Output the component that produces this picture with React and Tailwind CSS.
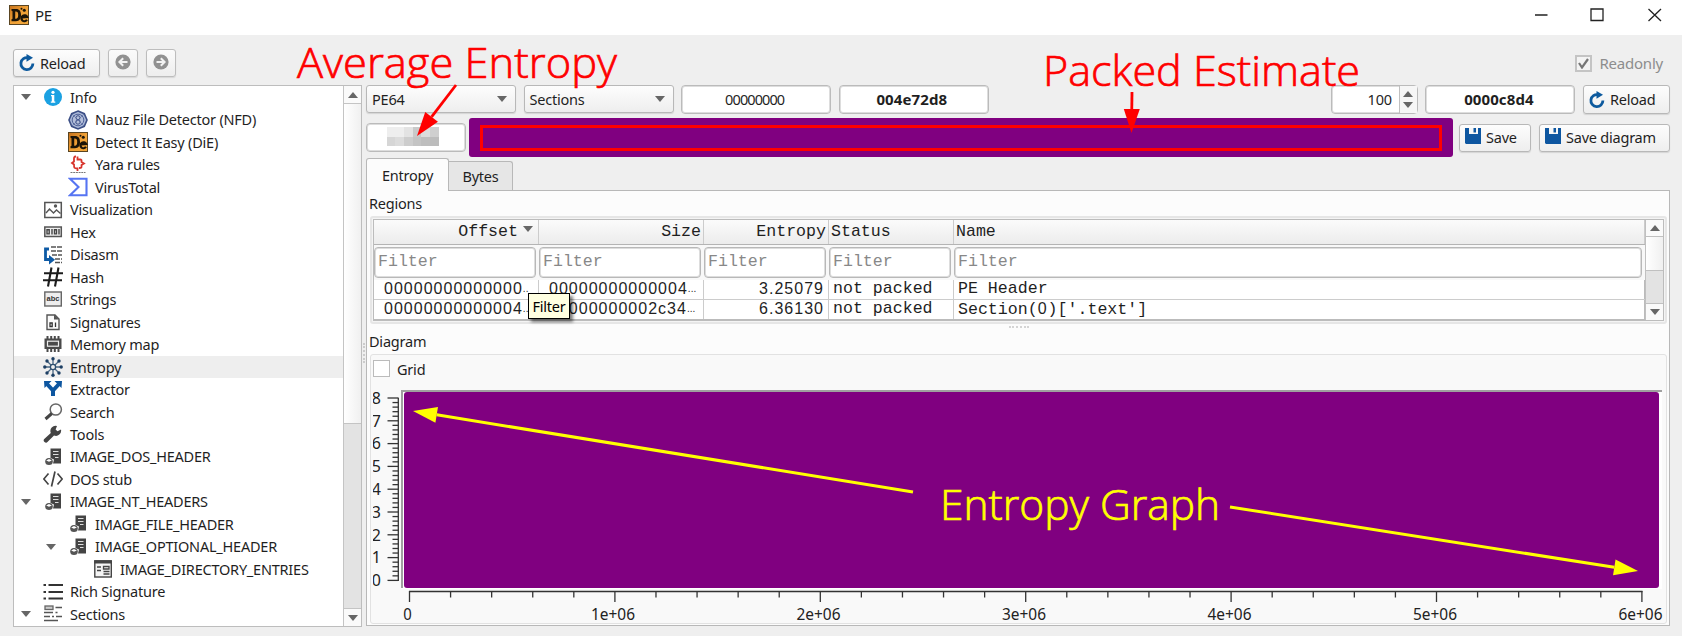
// App.jsx
const UI = "font-['Noto_Sans','Open_Sans',sans-serif]";

function DieIcon({ size = 20 }) {
  return (
    <svg width={size} height={size} viewBox="0 0 20 20" className="shrink-0">
      <defs>
        <linearGradient id="die" x1="0" y1="0" x2="1" y2="1">
          <stop offset="0" stopColor="#c8741d" />
          <stop offset=".5" stopColor="#f0a136" />
          <stop offset="1" stopColor="#f2a73a" />
        </linearGradient>
      </defs>
      <rect width="20" height="20" fill="#5a4522" />
      <rect x="1" y="1" width="18" height="18" fill="url(#die)" />
      <path d="M2.500 4h4.500c3.400 0 5 2.200 5 6s-1.600 6.200-5 6.200h-4.500v-2l1-.5v-7.500l-1-.5zM6.200 6.500v7.200c2.200.3 3-1 3-3.700s-.8-3.800-3-3.500z" fill="#1b1408" fillRule="evenodd" />
      <path d="M18 14.800a3 3 0 1 1 .2-2.700l-5 .3" fill="none" stroke="#1b1408" strokeWidth="2.200" />
      <circle cx="15.300" cy="5.300" r="1.500" fill="#1b1408" />
      <circle cx="12.500" cy="3.800" r="1" fill="#1b1408" />
    </svg>
  );
}

function ReloadIcon() {
  return (
    <svg width="16" height="18" viewBox="0 0 16 18" className="shrink-0">
      <path d="M9.200 3.700A6 6 0 1 0 13.900 9.500" fill="none" stroke="#0d5a9e" strokeWidth="2.800" />
      <path d="M7.500 0l6.500 3.700-6.500 4z" fill="#0d5a9e" />
    </svg>
  );
}

function SaveIcon() {
  return (
    <svg width="16" height="16" viewBox="0 0 16 16" className="mb-[3px] shrink-0">
      <path d="M0 0h16v16H1l-1-1z" fill="#0d56a0" />
      <rect x="4" y="0" width="9" height="6" fill="#f6f6f6" />
      <rect x="8.500" y="0" width="2.500" height="4.500" fill="#0d56a0" />
    </svg>
  );
}

function RoundArrow({ flip }) {
  return (
    <svg width="16" height="16" viewBox="0 0 16 16" className={flip ? "mb-[2px] rotate-180" : "mb-[2px]"}>
      <circle cx="8" cy="8" r="7.600" fill="#878787" />
      <path d="M12.500 8H5M8.200 4.200L4.400 8l3.800 3.800" fill="none" stroke="#f3f3f3" strokeWidth="2" />
    </svg>
  );
}

// tree icons, each drawn on a 20x20 box
const icons = {
  info: (
    <>
      <circle cx="10" cy="10" r="9" fill="#1ba1e2" />
      <path d="M8 8h3.300v6.500h1v1.200H7.800v-1.200h1V9.200H8z" fill="#fff" />
      <circle cx="10" cy="5.300" r="1.600" fill="#fff" />
    </>
  ),
  nauz: (
    <>
      <path d="M10 1l6.300 2.700L19 10l-2.700 6.300L10 19l-6.300-2.700L1 10l2.700-6.300z" fill="#a9b7d6" stroke="#3c4f86" strokeWidth="1.600" />
      <circle cx="10" cy="10" r="5.800" fill="#b4bfda" stroke="#52649a" />
      <circle cx="10" cy="7.700" r="2" fill="none" stroke="#3c4f86" />
      <circle cx="10" cy="12" r="2.200" fill="none" stroke="#3c4f86" />
      <path d="M4 4l12 12M16 4L4 16" stroke="#52649a" strokeWidth=".6" />
    </>
  ),
  yara: (
    <>
      <path d="M8 1.500C5.500 1.500 6 3 6 6.500L4 8l2 1.500c0 3.500 0 4 3.500 4V16M9.500 1.500v3H12c2 0 1.500 1 1.500 2.500L16 8.500l-2.500 1.500c0 2.500.5 3-2.500 3" fill="none" stroke="#d8342c" strokeWidth="1.800" />
      <path d="M2.500 17.500h15" stroke="#777" strokeWidth="1.200" strokeDasharray="2 .7" />
    </>
  ),
  vt: <path d="M2 1.800h16.500v16.500H2l8.500-8.200z" fill="none" stroke="#5674f2" strokeWidth="2.100" />,
  vis: (
    <>
      <rect x="1.800" y="2.500" width="16.500" height="15" fill="#fff" stroke="#555" strokeWidth="1.500" />
      <path d="M3 13l3.500-4 4 4 3-3 4 3.500" fill="none" stroke="#555" strokeWidth="1.400" />
      <circle cx="12.500" cy="6" r="1.700" fill="#555" />
    </>
  ),
  hex: (
    <>
      <rect x="1.800" y="5" width="16.500" height="9.500" fill="#eee" stroke="#555" strokeWidth="1.500" />
      <path d="M4 7.700h2.200v4.200H4zM9 7v5.500M11.500 7.700h2v4.200h-2zM16 7v5.500" fill="none" stroke="#444" strokeWidth="1.400" />
    </>
  ),
  disasm: (
    <>
      <path d="M8 2h11M8 6h11M9 10h10M12 14h7M12 17.500h7" stroke="#555" strokeWidth="1.500" strokeDasharray="5 1" />
      <path d="M6 4H2.500v10.500H8" fill="none" stroke="#0d5aa5" strokeWidth="2.800" />
      <path d="M6 10l6 4.700L6 19.500z" fill="#0d5aa5" />
    </>
  ),
  hash: <path d="M8.500.5l-3.500 19M15.500.5l-3.500 19M1 6.200h19M0 13.200h19" stroke="#1c1c1c" strokeWidth="2.100" />,
  strings: (
    <>
      <rect x="1.800" y="3" width="16.500" height="14" fill="#eee" stroke="#666" strokeWidth="1.400" />
      <text x="10" y="12.300" textAnchor="middle" fontSize="7.500" fontWeight="700" letterSpacing="0" fontFamily="Liberation Sans, sans-serif" fill="#333">abc</text>
    </>
  ),
  sig: (
    <>
      <path d="M4 3h8l4 4v10.500H4z" fill="#fafafa" stroke="#555" strokeWidth="1.400" />
      <path d="M11 2.500v5h5z" fill="#555" />
      <path d="M7 11h2.200v3.500H7zM12.500 10.500v4.500" fill="none" stroke="#333" strokeWidth="1.300" />
    </>
  ),
  mem: (
    <>
      <path d="M4.500 2v16M8.200 2v16M11.800 2v16M15.500 2v16" stroke="#4a4a4a" strokeWidth="2" />
      <rect x="1.500" y="4.500" width="17" height="10.500" fill="#4a4a4a" />
      <rect x="4.500" y="7.200" width="11" height="5" fill="#4a4a4a" stroke="#eee" strokeWidth="1.200" />
    </>
  ),
  entropy: (
    <>
      <path d="M10 2v16M2 10h16M4.200 4.200l11.600 11.600M15.800 4.200L4.200 15.800" stroke="#4a6884" strokeWidth="1.300" />
      <circle cx="10" cy="10" r="2.600" fill="#efefef" stroke="#2c4d6e" strokeWidth="1.300" />
      {[[10, 1.800], [10, 18.200], [1.800, 10], [18.200, 10], [4, 4], [16, 4], [4, 16], [16, 16]].map(([x, y]) => (
        <circle key={x + "-" + y} cx={x} cy={y} r="1.700" fill="#1d3f63" />
      ))}
    </>
  ),
  extractor: (
    <>
      <path d="M4 5l6 6.500V17M16 5l-6 6.500" fill="none" stroke="#0d56a0" strokeWidth="4" />
      <path d="M1 2h7.500L1.500 9zM19 2h-7.500l7 7z" fill="#0d56a0" />
    </>
  ),
  search: (
    <>
      <circle cx="12.800" cy="7.500" r="5.600" fill="#fff" stroke="#666" strokeWidth="1.500" />
      <path d="M8.800 11.500L2.500 17" stroke="#444" strokeWidth="3" />
    </>
  ),
  tools: (
    <path d="M18 5.500l-3.500 1.700-1.900-1.700L14 2a5.200 5.200 0 0 0-6.200 7L1.500 14.800a2.200 2.200 0 1 0 3.200 3L11 11.500a5.200 5.200 0 0 0 7-6z" fill="#444" />
  ),
  header: (
    <>
      <path d="M7.500 1.500h10.500v15H10l1-4-3.500-1.500z" fill="#444" />
      <path d="M10 4.500h5.500M10 7.500h5.500M12 10.500h3.500" stroke="#ddd" strokeWidth="1.200" />
      <ellipse cx="6" cy="14.500" rx="3.800" ry="3.500" fill="#555" />
      <path d="M3.200 13.500l2.800-1.500 2.800 1.500-2.800 1.200z" fill="#fff" />
    </>
  ),
  stub: (
    <path d="M5.500 4.500L.8 10l4.700 5.500M14.500 4.500l4.700 5.500-4.700 5.500M12 2.500L8.500 17.500" fill="none" stroke="#444" strokeWidth="1.700" />
  ),
  dir: (
    <>
      <rect x="1.800" y="2" width="16.500" height="16" fill="#f4f4f4" stroke="#444" strokeWidth="1.400" />
      <rect x="1.200" y="1.200" width="17.600" height="3.300" fill="#444" />
      <path d="M4 8h4M4 11.500h4M10.500 7.500h5.500v2.500h-5.500zM10.500 12.500h6M10.500 15h6" fill="none" stroke="#444" strokeWidth="1.300" />
    </>
  ),
  rich: <path d="M.5 3h2.500M.5 10h2.500M.5 16.500h2.500M5.500 3H20M5.500 10H20M5.500 16.500H20" stroke="#333" strokeWidth="2.200" />,
  sections: (
    <>
      <rect x="2" y="2" width="8" height="3.500" fill="#ccc" stroke="#666" strokeWidth="1.300" />
      <path d="M12.500 3.500h6.500M1 8.500h9M12.500 8.500h2M1 12.500h6M9 12.500h2M13 12.500h6M1 16.500h14" stroke="#555" strokeWidth="1.500" />
    </>
  ),
};

const tree = [
  { icon: "info", label: "Info", depth: 0, open: true },
  { icon: "nauz", label: "Nauz File Detector (NFD)", depth: 1 },
  { icon: "die", label: "Detect It Easy (DiE)", depth: 1 },
  { icon: "yara", label: "Yara rules", depth: 1 },
  { icon: "vt", label: "VirusTotal", depth: 1 },
  { icon: "vis", label: "Visualization", depth: 0 },
  { icon: "hex", label: "Hex", depth: 0 },
  { icon: "disasm", label: "Disasm", depth: 0 },
  { icon: "hash", label: "Hash", depth: 0 },
  { icon: "strings", label: "Strings", depth: 0 },
  { icon: "sig", label: "Signatures", depth: 0 },
  { icon: "mem", label: "Memory map", depth: 0 },
  { icon: "entropy", label: "Entropy", depth: 0, selected: true },
  { icon: "extractor", label: "Extractor", depth: 0 },
  { icon: "search", label: "Search", depth: 0 },
  { icon: "tools", label: "Tools", depth: 0 },
  { icon: "header", label: "IMAGE_DOS_HEADER", depth: 0 },
  { icon: "stub", label: "DOS stub", depth: 0 },
  { icon: "header", label: "IMAGE_NT_HEADERS", depth: 0, open: true },
  { icon: "header", label: "IMAGE_FILE_HEADER", depth: 1 },
  { icon: "header", label: "IMAGE_OPTIONAL_HEADER", depth: 1, open: true },
  { icon: "dir", label: "IMAGE_DIRECTORY_ENTRIES", depth: 2 },
  { icon: "rich", label: "Rich Signature", depth: 0 },
  { icon: "sections", label: "Sections", depth: 0, open: true },
];

const indents = ["pl-[7px]", "pl-[32px]", "pl-[57px]"];

function Caret({ up, className = "" }) {
  return (
    <svg width="10" height="6" viewBox="0 0 10 6" className={className}>
      <path d={up ? "M0 6h10L5 0z" : "M0 0h10L5 6z"} fill="#666666" />
    </svg>
  );
}

function TreeRow({ icon, label, depth, open, selected }) {
  return (
    <div className={`flex h-[22.480px] items-center ${indents[depth]} ${selected ? "bg-[#eeeeee]" : ""}`}>
      <span className="flex w-[22px] shrink-0">{open && <Caret />}</span>
      {icon === "die" ? (
        <DieIcon />
      ) : (
        <svg width="20" height="20" viewBox="0 0 20 20" className="shrink-0">{icons[icon]}</svg>
      )}
      <span className="ml-[7px] whitespace-nowrap">{label}</span>
    </div>
  );
}

function Button({ children, className = "" }) {
  return (
    <button className={`flex items-center rounded-[3px] border border-[#b8b8b8] bg-linear-to-b from-[#fdfdfd] to-[#eeeeee] shadow-[0_1px_1px_#d4d4d4] ${className}`}>
      {children}
    </button>
  );
}

function Field({ children, className = "" }) {
  return (
    <div className={`flex h-[29px] items-center justify-center rounded-[4px] border border-[#bbbbbb] bg-white shadow-[inset_0_0_0_1px_#dddddd] ${className}`}>
      {children}
    </div>
  );
}

function Combo({ children }) {
  return (
    <Button className="h-[28px] w-[150px] justify-between pl-[5px] pr-[8px]">
      <span>{children}</span>
      <Caret />
    </Button>
  );
}

function Sidebar() {
  return (
    <aside className="w-[349px]">
      <div className="flex h-[28px] gap-[8px]">
        <Button className="w-[87px] gap-[5px] pl-[5px]">
          <ReloadIcon />
          Reload
        </Button>
        <Button className="w-[30px] justify-center opacity-90"><RoundArrow /></Button>
        <Button className="w-[30px] justify-center opacity-90"><RoundArrow flip /></Button>
      </div>
      <div className="mt-[8px] flex h-[542px] border border-[#bdbdbd] bg-white">
        <div className="flex-1">
          {tree.map((row) => (
            <TreeRow key={row.label} {...row} />
          ))}
        </div>
        <div className="flex w-[18px] flex-col border-l border-[#c4c4c4] bg-[#e3e3e3]">
          <div className="flex h-[18px] items-center justify-center border-b border-[#c4c4c4] bg-[#fafafa]"><Caret up /></div>
          <div className="h-[320px] border-b border-[#c4c4c4] bg-linear-to-r from-white to-[#f0f0f0]" />
          <div className="mt-auto flex h-[18px] items-center justify-center border-t border-[#c4c4c4] bg-[#fafafa]"><Caret /></div>
        </div>
      </div>
    </aside>
  );
}

const mosaic = [
  "bg-[#eeeeee]", "bg-[#eeeeee]", "bg-[#e3e3e3]", "bg-[#c9c9c9]", "bg-[#dcdcdc]", "bg-[#cfcfcf]",
  "bg-[#d6d6d6]", "bg-[#dcdcdc]", "bg-[#cdcdcd]", "bg-[#c4c4c4]", "bg-[#bebebe]", "bg-[#bcbcbc]",
];

function Controls() {
  return (
    <>
      <div className="flex h-[29px] gap-[7.600px]">
        <Combo>PE64</Combo>
        <Combo>Sections</Combo>
        <Field className="w-[150px] pr-[3px] text-[14.500px] tracking-[-0.900px]">00000000</Field>
        <Field className="w-[150px] pr-[4px] text-[15px] font-bold tracking-[0.100px]">004e72d8</Field>
        <div className="ml-auto flex h-[29px] w-[87px] rounded-[4px] border border-[#bbbbbb] bg-white shadow-[inset_0_0_0_1px_#dddddd]">
          <span className="flex flex-1 items-center justify-end pr-[7px]">100</span>
          <span className="flex w-[18px] flex-col items-center justify-center gap-[5px] border-l border-[#c0c0c0] bg-[#f6f6f6]">
            <Caret up />
            <Caret />
          </span>
        </div>
        <Field className="w-[150px] pr-[3px] text-[15px] font-bold tracking-[0.100px]">0000c8d4</Field>
        <Button className="h-[29px] w-[87px] gap-[5px] pl-[5px]">
          <ReloadIcon />
          Reload
        </Button>
      </div>
      <div className="mt-[4px] flex h-[39px] items-center">
        <Field className="w-[100px]">
          <div className="-ml-[7px] grid h-[19px] w-[52px] -translate-y-[1px] grid-cols-6">
            {mosaic.map((c, i) => (
              <span key={i} className={c} />
            ))}
          </div>
        </Field>
        <div className="ml-[3px] h-[39px] w-[984px] rounded-[3px] bg-[#800080] px-[11px] py-[7px]">
          <div className="h-[26px] w-[962px] border-[3px] border-[#ff0000]" />
        </div>
        <Button className="ml-[6px] h-[28px] w-[72px] gap-[5px] pl-[5px]">
          <SaveIcon />
          Save
        </Button>
        <Button className="ml-auto h-[28px] w-[131px] gap-[5px] pl-[5px]">
          <SaveIcon />
          Save diagram
        </Button>
      </div>
    </>
  );
}

const cols = "grid grid-cols-[165px_165px_125px_125px_691px]";
const headers = ["Offset", "Size", "Entropy", "Status", "Name"];
const num = "font-['Liberation_Sans',sans-serif] text-[16px] tracking-[1.020px]";

function HexCell({ value, tail }) {
  return (
    <span className={`flex overflow-hidden border-r border-[#cccccc] pl-[10px] ${num}`}>
      {value}
      <span className="text-[10px] tracking-[0px]">{tail}</span>
    </span>
  );
}

function Regions() {
  return (
    <div className="ml-[3px] flex h-[108px] w-[1297px] rounded-[3px] border-2 border-[#e6e6e6] bg-[#f4f4f4] p-[1px]">
      <div className="flex h-[102px] w-full border border-[#bcbcbc] bg-white font-['Liberation_Mono',monospace] text-[16.600px] tracking-normal">
        <div className="flex-1">
          <div className={`${cols} h-[25px] border-b border-[#b4b4b4] bg-linear-to-b from-[#fbfbfb] to-[#ececec]`}>
            {headers.map((h, i) => (
              <div key={h} className={`flex items-center gap-[5px] border-r border-[#cccccc] ${i < 3 ? "justify-end" : "pl-[2px]"} ${i === 0 ? "pr-[5px]" : i < 3 ? "pr-[2px]" : ""}`}>
                {h}
                {i === 0 && <Caret className="mb-[6px]" />}
              </div>
            ))}
          </div>
          <div className={`${cols} h-[35px] bg-[#f8f8f8] pt-[2px] text-[#888888]`}>
            {headers.map((h) => (
              <div key={h} className="mr-[3px] flex h-[31px] items-center rounded-[4px] border border-[#b8b8b8] bg-white pl-[3px] shadow-[inset_0_0_0_1px_#dddddd]">
                Filter
              </div>
            ))}
          </div>
          <div className={`${cols} h-[20px] border-b border-[#cccccc] leading-[18px]`}>
            <HexCell value="00000000000000" tail=".." />
            <HexCell value="00000000000004" tail="..." />
            <span className={`border-r border-[#cccccc] pr-[4px] text-right ${num}`}>3.25079</span>
            <span className="border-r border-[#cccccc] pl-[4px]">not packed</span>
            <span className="border-r border-[#bbbbbb] pl-[4px]">PE Header</span>
          </div>
          <div className={`${cols} h-[20px] border-b border-[#bbbbbb] leading-[18px]`}>
            <HexCell value="00000000000004" tail=".." />
            <HexCell value="00000000002c34" tail="..." />
            <span className={`border-r border-[#cccccc] pr-[4px] text-right ${num}`}>6.36130</span>
            <span className="border-r border-[#cccccc] pl-[4px]">not packed</span>
            <span className="border-r border-[#bbbbbb] pl-[4px]">
              Section(<span className={num}>0</span>)['.text']
            </span>
          </div>
        </div>
        <div className="flex w-[18px] flex-col border-l border-[#c0c0c0] bg-[#e3e3e3]">
          <div className="flex h-[17px] items-center justify-center border-b border-[#c0c0c0] bg-[#fafafa]"><Caret up /></div>
          <div className="h-[34px] border-b border-[#c0c0c0] bg-linear-to-r from-white to-[#f0f0f0]" />
          <div className="mt-auto flex h-[17px] items-center justify-center border-t border-[#c0c0c0] bg-[#fafafa]"><Caret /></div>
        </div>
      </div>
    </div>
  );
}

const yTicks = Array.from({ length: 41 }, (_, i) => i);
const xTicks = Array.from({ length: 31 }, (_, i) => i);

// drawn on the whole diagram panel: frame, plot area and both scales
function Diagram() {
  return (
    <svg width="1293" height="240" viewBox="373 384 1293 240" fontFamily="Noto Sans, sans-serif" fontSize="16" letterSpacing="0" fill="#222" className="block">
      <rect x="401" y="390" width="1261" height="199" fill="#ffffff" />
      <path d="M402 588V391H1662" fill="none" stroke="#a0a0a0" strokeWidth="2" />
      <rect x="404" y="392" width="1255" height="196" rx="3" fill="#800080" />
      <g stroke="#333" strokeWidth="1.300" fill="none">
        <path d="M398.300 397.700V581" />
        {yTicks.map((i) => (
          <path key={i} d={`M${i % 5 ? 392.500 : 387.500} ${398 + i * 4.560}H398.300`} />
        ))}
        <path d="M409 591.500H1642.500" />
        {xTicks.map((i) => (
          <path key={i} d={`M${409.500 + i * 41.080} 591V${i % 5 ? 597.500 : 602}`} />
        ))}
      </g>
      {[8, 7, 6, 5, 4, 3, 2, 1, 0].map((n, i) => (
        <text key={n} x="381" y={403.800 + i * 22.800} textAnchor="end">{n}</text>
      ))}
      {["0", "1e+06", "2e+06", "3e+06", "4e+06", "5e+06", "6e+06"].map((t, i) => (
        <text key={t} x={407.500 + i * 205.500} y="620" textAnchor="middle" textLength={i ? 44 : 8.500} lengthAdjust="spacingAndGlyphs">
          {t}
        </text>
      ))}
    </svg>
  );
}

function Arrow({ x1, y1, x2, y2, color, width, head = 24, spread = 8 }) {
  const len = Math.hypot(x2 - x1, y2 - y1);
  const ux = (x2 - x1) / len;
  const uy = (y2 - y1) / len;
  const bx = x2 - ux * head;
  const by = y2 - uy * head;
  return (
    <g fill={color} stroke="none">
      <path d={`M${x1} ${y1}L${bx} ${by}`} stroke={color} strokeWidth={width} />
      <path d={`M${x2} ${y2}L${bx - uy * spread} ${by + ux * spread}L${bx + uy * spread} ${by - ux * spread}z`} />
    </g>
  );
}

function Annotations() {
  return (
    <svg width="1682" height="636" viewBox="0 0 1682 636" className="pointer-events-none absolute left-0 top-0" fontFamily="Open Sans, Noto Sans, sans-serif" fontWeight="300" fontSize="42" letterSpacing="0" strokeWidth="0.700">
      <text x="297" y="78" fill="#ff0000" stroke="#ff0000" textLength="320" lengthAdjust="spacingAndGlyphs">Average Entropy</text>
      <text x="1043" y="86" fill="#ff0000" stroke="#ff0000" textLength="317" lengthAdjust="spacingAndGlyphs">Packed Estimate</text>
      <text x="940" y="520" fill="#ffff00" stroke="#ffff00" textLength="280" lengthAdjust="spacingAndGlyphs">Entropy Graph</text>
      <Arrow x1={456} y1={85} x2={417} y2={136} color="#ff0000" width={2.800} />
      <Arrow x1={1132} y1={92} x2={1131.500} y2={133} color="#ff0000" width={2.800} />
      <Arrow x1={913} y1={492} x2={413} y2={411} color="#ffff00" width={3} />
      <Arrow x1={1230} y1={507} x2={1638} y2={571} color="#ffff00" width={3} />
    </svg>
  );
}

export default function App() {
  return (
    <div className={`relative h-[636px] w-[1682px] overflow-hidden bg-[#efefef] text-[14.500px] leading-none tracking-[-0.220px] text-[#1f1f1f] ${UI}`}>
      <header className="flex h-[35px] items-center bg-white pb-[5px] pl-[9px]">
        <DieIcon />
        <span className="ml-[6px] text-[15px]">PE</span>
        <svg width="130" height="16" viewBox="0 0 130 16" className="ml-auto mr-[18px]" fill="none" stroke="#222" strokeWidth="1.300">
          <path d="M1 8h12.500M57 2h12v11.500H57zM114.500 2L127 14M127 2L114.500 14" />
        </svg>
      </header>

      <div className="flex pl-[13px] pt-[14px]">
        <Sidebar />

        {/* splitter grip */}
        <div className="flex w-[4px] items-center justify-center pt-[30px]">
          <div className="h-[20px] border-l-2 border-dotted border-[#cccccc]" />
        </div>

        <main className="w-[1304px]">
          <div className="flex h-[36px] justify-end pr-[7px]">
            <div className="flex h-[28px] items-center gap-[7px] text-[15px] text-[#8d8d8d]">
              <span className="flex h-[17px] w-[17px] items-center justify-center border-2 border-[#c4c4c4] bg-[#f4f4f4]">
                <svg width="11" height="11" viewBox="0 0 11 11">
                  <path d="M1 5l3 4.500L10 1" fill="none" stroke="#777" strokeWidth="2.200" />
                </svg>
              </span>
              Readonly
            </div>
          </div>

          <Controls />

          <div className="mt-[1px] flex h-[32px] items-end">
            <div className="z-10 -mb-px flex h-[33px] w-[83px] items-center justify-center rounded-t-[3px] border border-b-0 border-[#b8b8b8] bg-[#fcfcfc]">Entropy</div>
            <div className="flex h-[29px] w-[64px] items-center justify-center rounded-tr-[3px] border border-b-0 border-l-0 border-[#b8b8b8] bg-[#e6e6e6]">Bytes</div>
          </div>
          <section className="h-[436px] border border-[#b8b8b8] bg-[#fcfcfc]">
            <div className="flex h-[25px] items-center pl-[2px]">Regions</div>
            <Regions />
            <div className="flex h-[30px] flex-col pl-[2px]">
              {/* horizontal splitter grip */}
              <div className="mx-auto mt-[2px] w-[20px] border-t-2 border-dotted border-[#d4d4d4]" />
              <span className="mt-[6px]">Diagram</span>
            </div>
            <div className="ml-[3px] h-[270px] w-[1297px] rounded-[3px] border border-[#e2e2e2] bg-[#f9f9f9] pl-[2px] pt-[5px]">
              <div className="flex h-[24px] items-start gap-[7px]">
                <span className="h-[17px] w-[17px] border border-[#bbbbbb] bg-white" />
                <span className="pt-[2px]">Grid</span>
              </div>
              <Diagram />
            </div>
          </section>
        </main>
      </div>

      <div className="absolute left-[528px] top-[293px] flex h-[26px] w-[42px] items-center justify-center border border-black bg-[#ffffe1] text-black shadow-[3px_3px_3px_rgba(0,0,0,0.5)]">
        Filter
      </div>
      <Annotations />
    </div>
  );
}
